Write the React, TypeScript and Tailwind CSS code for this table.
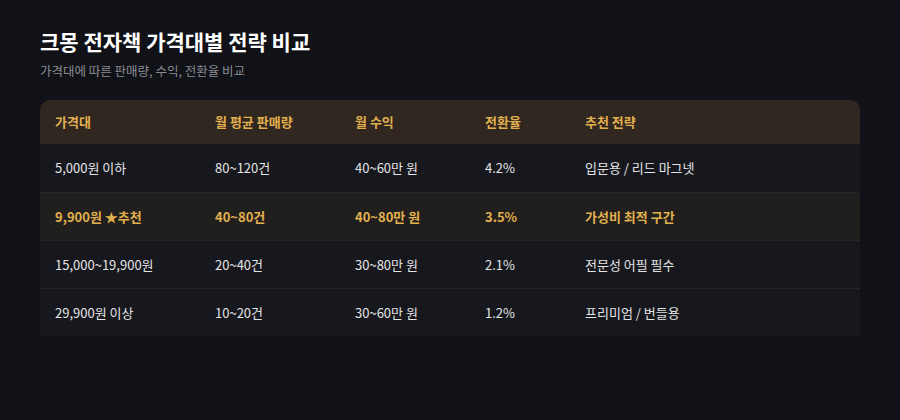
const rows = [
  { price: "5,000원 이하", sales: "80~120건", revenue: "40~60만 원", rate: "4.2%", strategy: "입문용 / 리드 마그넷" },
  { price: "9,900원 ★추천", sales: "40~80건", revenue: "40~80만 원", rate: "3.5%", strategy: "가성비 최적 구간", highlight: true },
  { price: "15,000~19,900원", sales: "20~40건", revenue: "30~80만 원", rate: "2.1%", strategy: "전문성 어필 필수" },
  { price: "29,900원 이상", sales: "10~20건", revenue: "30~60만 원", rate: "1.2%", strategy: "프리미엄 / 번들용" },
];

const headers = ["가격대", "월 평균 판매량", "월 수익", "전환율", "추천 전략"];
const widths = ["w-[160px]", "w-[140px]", "w-[130px]", "w-[100px]", "flex-1"];

export default function App() {
  return (
    <div
      className="w-[900px] h-[420px] bg-[#111217] px-10 pt-[26px]"
      style={{ fontFamily: '"Noto Sans CJK KR", "Noto Sans", sans-serif' }}
    >
      <h1 className="text-[21px] font-bold text-white leading-[30px]">
        크몽 전자책 가격대별 전략 비교
      </h1>
      <p className="mt-[6px] text-[12.5px] text-[#8b8c92] leading-[18px]">
        가격대에 따른 판매량, 수익, 전환율 비교
      </p>

      <div className="mt-[20px] rounded-t-[10px] overflow-hidden text-[13px]">
        {/* Header */}
        <div className="flex items-center h-[44px] bg-[#302720] text-[#e2b04f] font-bold">
          {headers.map((h, i) => (
            <div key={h} className={`${widths[i]} pl-[15px]`}>
              {h}
            </div>
          ))}
        </div>

        {rows.map((r, idx) => {
          const cells = [r.price, r.sales, r.revenue, r.rate, r.strategy];
          return (
            <div
              key={r.price}
              className={`flex items-center h-[48px] ${
                idx > 0 ? "border-t border-[#25262b]" : ""
              } ${
                r.highlight
                  ? "bg-[#201f1d] text-[#e2b04f] font-bold"
                  : "bg-[#17181d] text-[#e4e4e6]"
              }`}
            >
              {cells.map((c, i) => (
                <div key={i} className={`${widths[i]} pl-[15px]`}>
                  {c}
                </div>
              ))}
            </div>
          );
        })}
      </div>
    </div>
  );
}
